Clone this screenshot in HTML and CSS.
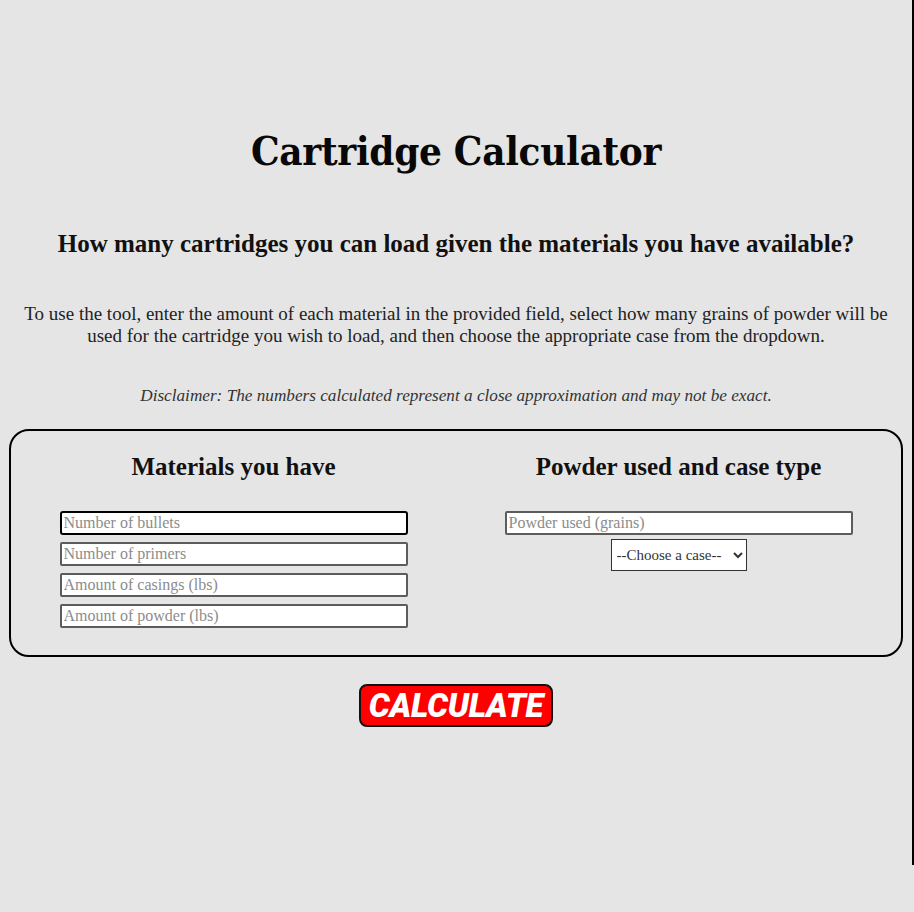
FILE: index.html
```html
<!DOCTYPE html>
<html lang="en">
<head>
<meta charset="utf-8">
<title>Cartridge Calculator</title>
<link rel="stylesheet" href="styles.css">
</head>
<body>
<div class="page">
  <main class="main">
    <h1 class="title">Cartridge Calculator</h1>
    <h2 class="subtitle">How many cartridges you can load given the materials you have available?</h2>
    <p class="intro">To use the tool, enter the amount of each material in the provided field, select how many grains of powder will be used for the cartridge you wish to load, and then choose the appropriate case from the dropdown.</p>
    <p class="disclaimer">Disclaimer: The numbers calculated represent a close approximation and may not be exact.</p>
    <section class="panel">
      <div class="col">
        <h3 class="col-title">Materials you have</h3>
        <div class="fields">
          <input class="field field-focus" type="text" placeholder="Number of bullets" autofocus>
          <input class="field" type="text" placeholder="Number of primers">
          <input class="field" type="text" placeholder="Amount of casings (lbs)">
          <input class="field" type="text" placeholder="Amount of powder (lbs)">
        </div>
      </div>
      <div class="col">
        <h3 class="col-title">Powder used and case type</h3>
        <div class="fields fields-tight">
          <input class="field" type="text" placeholder="Powder used (grains)">
          <select class="case-select">
            <option>--Choose a case--</option>
          </select>
        </div>
      </div>
    </section>
    <div class="actions">
      <button class="calc-btn" type="button">CALCULATE</button>
    </div>
  </main>
</div>
</body>
</html>
```
FILE: styles.css
```css
html, body {
  margin: 0;
  padding: 0;
  background: #e5e5e5;
}
.page {
  box-sizing: border-box;
  width: 914px;
  height: 865px;
  border-right: 2px solid #000;
}
.main {
  padding-top: 127px;
  color: #111;
  text-align: center;
}
.title {
  margin: 0;
  font-family: "DejaVu Serif Condensed", "DejaVu Serif", serif;
  font-stretch: condensed;
  font-weight: 700;
  font-size: 40px;
  line-height: 48px;
  letter-spacing: -0.3px;
  color: #080808;
}
.subtitle {
  margin: 55px 0 0;
  font-family: "Liberation Serif", serif;
  font-weight: 700;
  font-size: 25px;
  line-height: 28px;
}
.intro {
  margin: 45px 16px 0;
  font-family: "Liberation Serif", serif;
  font-size: 19px;
  line-height: 22px;
  color: #222;
}
.disclaimer {
  margin: 38px 0 0;
  font-family: "Liberation Serif", serif;
  font-style: italic;
  font-size: 17.2px;
  line-height: 22px;
  color: #333;
}
.panel {
  box-sizing: border-box;
  margin: 22px 0 0 9px;
  width: 894px;
  border: 2px solid #000;
  border-radius: 20px;
  display: grid;
  grid-template-columns: 1fr 1fr;
  padding: 22px 0 27px;
}
.col {
  display: flex;
  flex-direction: column;
  align-items: center;
}
.col-title {
  margin: 0;
  font-family: "Liberation Serif", serif;
  font-weight: 700;
  font-size: 25px;
  line-height: 28px;
}
.fields {
  margin-top: 30px;
  display: flex;
  flex-direction: column;
  align-items: center;
  gap: 7px;
}
.fields-tight {
  gap: 4px;
}
.field {
  box-sizing: border-box;
  width: 348px;
  height: 24px;
  margin: 0;
  padding: 0 2px;
  background: #fff;
  border: 2px solid #5c5c5c;
  border-radius: 2px;
  font-family: "Liberation Serif", serif;
  font-size: 16px;
  color: #111;
}
.field::placeholder {
  color: #8c8c8c;
}
.field:focus,
.field-focus {
  outline: none;
  border-color: #000;
  border-radius: 3px;
}
.case-select {
  box-sizing: border-box;
  width: 136px;
  height: 32px;
  margin: 0;
  background: #fff;
  border: 1px solid #333;
  border-radius: 0;
  font-family: "Liberation Serif", serif;
  font-size: 15px;
  color: #333;
  padding: 0 1px;
}
.actions {
  margin-top: 27px;
  display: flex;
  justify-content: center;
}
.calc-btn {
  box-sizing: border-box;
  width: 194px;
  height: 43px;
  margin: 0;
  padding: 0;
  background: #ff0000;
  border: 2px solid #111;
  border-radius: 8px;
  color: #fff;
  font-family: Roboto, "DejaVu Sans", sans-serif;
  font-weight: 900;
  font-style: italic;
  font-size: 33px;
  line-height: 39px;
  letter-spacing: -0.3px;
}
```
